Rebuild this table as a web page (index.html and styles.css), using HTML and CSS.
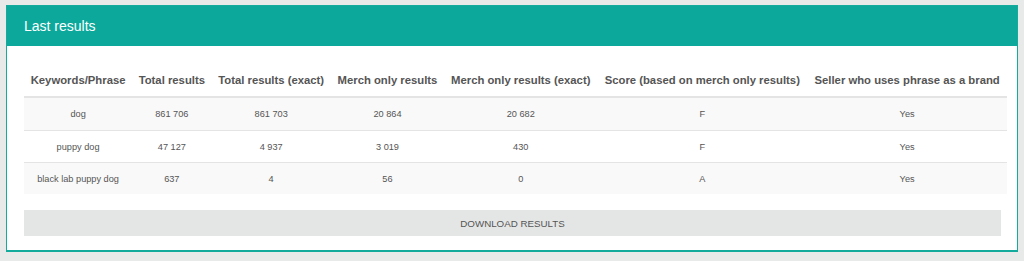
FILE: index.html
```html
<!DOCTYPE html>
<html lang="en">
<head>
<meta charset="utf-8">
<title>Last results</title>
<link rel="stylesheet" href="styles.css">
</head>
<body>
<section class="panel">
  <header class="panel-heading">Last results</header>
  <div class="panel-body">
    <table class="results">
      <thead>
        <tr>
          <th>Keywords/Phrase</th>
          <th>Total results</th>
          <th>Total results (exact)</th>
          <th>Merch only results</th>
          <th>Merch only results (exact)</th>
          <th>Score (based on merch only results)</th>
          <th>Seller who uses phrase as a brand</th>
        </tr>
      </thead>
      <tbody>
        <tr>
          <td>dog</td><td>861 706</td><td>861 703</td><td>20 864</td><td>20 682</td><td>F</td><td>Yes</td>
        </tr>
        <tr>
          <td>puppy dog</td><td>47 127</td><td>4 937</td><td>3 019</td><td>430</td><td>F</td><td>Yes</td>
        </tr>
        <tr>
          <td>black lab puppy dog</td><td>637</td><td>4</td><td>56</td><td>0</td><td>A</td><td>Yes</td>
        </tr>
      </tbody>
    </table>
    <button class="download" type="button">DOWNLOAD RESULTS</button>
  </div>
</section>
</body>
</html>
```
FILE: styles.css
```css
html, body {
  margin: 0;
  padding: 0;
}
body {
  background: #e8e9e9;
  font-family: "Liberation Sans", Arial, Helvetica, sans-serif;
  color: #555;
  padding: 5px 6px 0 6px;
}
.panel {
  background: #fff;
  border: 1px solid #14aa9c;
  border-bottom-width: 2px;
  height: 247px;
  box-sizing: border-box;
}
.panel-heading {
  background: #0ba89b;
  color: #fff;
  font-size: 14px;
  height: 40px;
  box-sizing: border-box;
  padding: 0 17px;
  display: flex;
  align-items: center;
}
.panel-body {
  padding: 18px 10px 0 17px;
}
.results {
  width: 100%;
  border-collapse: collapse;
  border-spacing: 0;
}
.results th {
  font-size: 11.3px;
  font-weight: bold;
  color: #555;
  text-align: center;
  white-space: nowrap;
  padding: 0 6px;
  height: 32px;
  border-bottom: 2px solid #e4e4e4;
  vertical-align: middle;
}
.results td {
  font-size: 9.2px;
  color: #555;
  text-align: center;
  white-space: nowrap;
  padding: 0 6px;
  height: 31px;
  border-top: 1px solid #e4e4e4;
}
.results tbody tr:first-child td {
  border-top: none;
  height: 32px;
}
.results tbody tr:nth-child(odd) {
  background: #f9f9f9;
}
.download {
  display: block;
  width: calc(100% - 6px);
  margin: 16px 0 0 0;
  height: 26px;
  border: none;
  background: #e4e5e5;
  color: #555;
  font-family: "Liberation Sans", Arial, Helvetica, sans-serif;
  font-size: 9.75px;
  padding: 0;
}
```
